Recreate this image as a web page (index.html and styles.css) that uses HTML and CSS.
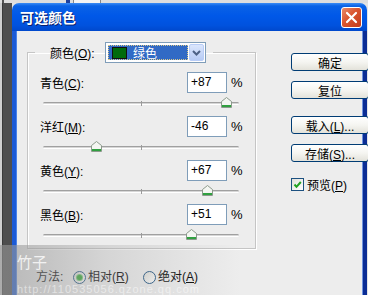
FILE: index.html
```html
<!DOCTYPE html>
<html lang="zh-CN">
<head>
    <meta charset="UTF-8">
    <meta name="viewport" content="width=device-width, initial-scale=1.0">
    <title>可选颜色</title>
    <link rel="stylesheet" href="styles.css">
</head>
<body>
<div class="desk">
    <div class="desk_top">
        <span class="top_a"></span>
        <span class="top_line"></span>
        <span class="top_box"></span>
    </div>
    <div class="desk_row">
        <div class="desk_left"></div>
        <div class="win">
            <div class="title_bar">
                <span class="title">可选颜色</span>
                <span class="close">
                    <svg width="21" height="21" viewBox="0 0 21 21">
                        <path d="M6 6 L15 15 M15 6 L6 15" stroke="#fff" stroke-width="2.2" stroke-linecap="round"/>
                    </svg>
                </span>
            </div>
            <div class="client">
                <div class="main">
                    <fieldset class="group">
                        <legend>
                            <span class="lg_lbl">颜色(<u>O</u>):</span>
                            <span class="select">
                                <span class="sel_val"><i class="swatch"></i>绿色</span>
                                <span class="sel_btn">
                                    <svg width="9" height="6" viewBox="0 0 9 6">
                                        <path d="M1 1 L4.5 4.5 L8 1" stroke="#4d6185" stroke-width="2" fill="none"/>
                                    </svg>
                                </span>
                            </span>
                        </legend>

                        <div class="row">
                            <div class="row_top">
                                <span class="lbl">青色(<u>C</u>):</span>
                                <span class="num">+87</span>
                                <span class="pct">%</span>
                            </div>
                            <div class="slider">
                                <span class="track"></span>
                                <span class="tick"></span>
                                <span class="thumb" style="left: 93.5%">
                                    <svg width="11" height="11" viewBox="0 0 11 11"><path d="M0.5 4.5 L5.5 0.5 L10.5 4.5 L10.5 10.5 L0.5 10.5 Z" fill="#f4f6f2" stroke="#8c9a8c"/><rect x="1" y="8" width="9" height="2" fill="#30a040"/></svg>
                                </span>
                            </div>
                        </div>
                        <div class="row">
                            <div class="row_top">
                                <span class="lbl">洋红(<u>M</u>):</span>
                                <span class="num">-46</span>
                                <span class="pct">%</span>
                            </div>
                            <div class="slider">
                                <span class="track"></span>
                                <span class="tick"></span>
                                <span class="thumb" style="left: 27%">
                                    <svg width="11" height="11" viewBox="0 0 11 11"><path d="M0.5 4.5 L5.5 0.5 L10.5 4.5 L10.5 10.5 L0.5 10.5 Z" fill="#f4f6f2" stroke="#8c9a8c"/><rect x="1" y="8" width="9" height="2" fill="#30a040"/></svg>
                                </span>
                            </div>
                        </div>
                        <div class="row">
                            <div class="row_top">
                                <span class="lbl">黄色(<u>Y</u>):</span>
                                <span class="num">+67</span>
                                <span class="pct">%</span>
                            </div>
                            <div class="slider">
                                <span class="track"></span>
                                <span class="tick"></span>
                                <span class="thumb" style="left: 83.5%">
                                    <svg width="11" height="11" viewBox="0 0 11 11"><path d="M0.5 4.5 L5.5 0.5 L10.5 4.5 L10.5 10.5 L0.5 10.5 Z" fill="#f4f6f2" stroke="#8c9a8c"/><rect x="1" y="8" width="9" height="2" fill="#30a040"/></svg>
                                </span>
                            </div>
                        </div>
                        <div class="row">
                            <div class="row_top">
                                <span class="lbl">黑色(<u>B</u>):</span>
                                <span class="num">+51</span>
                                <span class="pct">%</span>
                            </div>
                            <div class="slider">
                                <span class="track"></span>
                                <span class="tick"></span>
                                <span class="thumb" style="left: 75.5%">
                                    <svg width="11" height="11" viewBox="0 0 11 11"><path d="M0.5 4.5 L5.5 0.5 L10.5 4.5 L10.5 10.5 L0.5 10.5 Z" fill="#f4f6f2" stroke="#8c9a8c"/><rect x="1" y="8" width="9" height="2" fill="#30a040"/></svg>
                                </span>
                            </div>
                        </div>
                    </fieldset>

                    <div class="method">
                        <span class="m_lbl">方法:</span>
                        <span class="radio on"></span>
                        <span class="r_txt">相对(<u>R</u>)</span>
                        <span class="radio"></span>
                        <span class="r_txt">绝对(<u>A</u>)</span>
                    </div>
                </div>

                <div class="side">
                    <button class="btn b_ok">确定</button>
                    <button class="btn b_reset">复位</button>
                    <button class="btn b_load">载入(<u>L</u>)...</button>
                    <button class="btn b_save">存储(<u>S</u>)...</button>
                    <div class="check_row">
                        <span class="check">
                            <svg width="11" height="11" viewBox="0 0 11 11">
                                <path d="M2.5 5.5 L4.5 7.8 L8.8 3" stroke="#21a121" stroke-width="2" fill="none"/>
                            </svg>
                        </span>
                        <span>预览(<u>P</u>)</span>
                    </div>
                </div>
            </div>
        </div>
    </div>
    <!-- 水印 -->
    <div class="mark">
        <span class="mark_name">竹子</span>
        <span class="mark_url">http://110535056.qzone.qq.com</span>
    </div>
</div>
</body>
</html>
```

FILE: styles.css
```css
* {
    box-sizing: border-box;
}

body {
    margin: 0;
    background: #dcdcdc;
    font-family: "Liberation Sans", "Noto Sans CJK SC", sans-serif;
    font-size: 12px;
    color: #000;
}

u {
    text-decoration: underline;
    text-underline-offset: 1px;
}

.desk {
    width: 368px;
    height: 295px;
    overflow: hidden;
    position: relative;
    background: #e4e4e4;
}

.desk_top {
    height: 3px;
    display: flex;
    background: #dedede;
}

.top_a {
    width: 2px;
    margin-left: 2px;
    background: #555;
}

.top_line {
    width: 4px;
    margin-left: 62px;
    background: #1d3f9c;
}

.top_box {
    width: 28px;
    margin-left: 3px;
    background: #f4f4f4;
    border-left: 1px solid #888;
    border-right: 1px solid #888;
}

.desk_row {
    display: flex;
    height: 292px;
}

.desk_left {
    width: 12px;
    background: linear-gradient(to right, #cfcfcf 0, #cfcfcf 2px, #3a3a3a 2px, #3a3a3a 3px, #4e4e4e 3px);
}

.win {
    width: 355px;
    display: flex;
    flex-direction: column;
}

.title_bar {
    height: 28px;
    display: flex;
    align-items: center;
    justify-content: space-between;
    padding: 0 5px 0 8px;
    border-radius: 7px 7px 0 0;
    background: linear-gradient(#3b8cf5 0, #0a62e6 3px, #0058e8 45%, #0052de 80%, #0048cc 100%);
}

.title {
    color: #fff;
    font-family: "Noto Sans CJK SC", sans-serif;
    font-weight: bold;
    font-size: 14px;
    text-shadow: 1px 1px 0 #0a1f6c;
}

.close {
    width: 21px;
    height: 21px;
    border: 1px solid #fff;
    border-radius: 3px;
    background: linear-gradient(135deg, #e98b6b 0, #d9542f 45%, #c23c1b 100%);
    display: flex;
}

.close svg {
    margin: -1px;
}

.client {
    flex: 1;
    display: flex;
    background: #ededed;
    border-left: 4px solid #1b5ad6;
    border-right: 4px solid #0b2d95;
    box-shadow: inset 1px 0 0 #4a82e8, inset -1px 0 0 #6f93dd;
}

.main {
    width: 258px;
    padding-left: 11px;
    padding-top: 11px;
}

.group {
    width: 229px;
    margin: 0;
    padding: 9px 0 0 0;
    border: 1px solid #c5c5c5;
    box-shadow: 1px 1px 0 #fff, inset 1px 1px 0 #fff;
}

.group legend {
    display: flex;
    align-items: center;
    margin-left: 7px;
    padding: 0 7px 0 15px;
    height: 21px;
}

.lg_lbl {
    width: 55px;
}

.select {
    width: 101px;
    height: 21px;
    border: 1px solid #7f9db9;
    background: #fff;
    display: flex;
    align-items: center;
    padding: 0 1px 0 2px;
}

.sel_val {
    width: 82px;
    height: 15px;
    display: flex;
    align-items: center;
    color: #fff;
    background: #316ac5;
    outline: 1px dotted #d9c98a;
    outline-offset: -1px;
    padding-left: 4px;
}

.swatch {
    width: 15px;
    height: 12px;
    background: #006b0c;
    border: 1px solid #111;
    margin-right: 6px;
}

.sel_btn {
    width: 15px;
    height: 17px;
    margin-left: 1px;
    border-radius: 2px;
    border: 1px solid #b9cdf7;
    background: linear-gradient(#dbe6fc, #b7cbf5);
    display: flex;
    align-items: center;
    justify-content: center;
}

.row {
    height: 44px;
    padding-left: 12px;
}

.row_top {
    height: 21px;
    display: flex;
    align-items: center;
}

.lbl {
    width: 147px;
}

.num {
    width: 40px;
    height: 21px;
    line-height: 19px;
    padding-left: 3px;
    background: #fff;
    border: 1px solid #7f9db9;
}

.pct {
    margin-left: 4px;
    font-size: 13px;
}

.slider {
    position: relative;
    width: 196px;
    height: 23px;
    margin-left: 3px;
}

.track {
    position: absolute;
    left: 0;
    right: 0;
    top: 9px;
    height: 3px;
    border-radius: 2px;
    border-top: 1px solid #a0a0a0;
    border-bottom: 1px solid #fff;
    background: #d6d6d6;
}

.tick {
    position: absolute;
    left: 50%;
    top: 8px;
    width: 1px;
    height: 5px;
    background: #9a9a9a;
}

.thumb {
    position: absolute;
    top: 4px;
    width: 11px;
    height: 11px;
    margin-left: -5px;
    display: flex;
}

.method {
    display: flex;
    align-items: center;
    height: 18px;
    margin-top: 19px;
    padding-left: 9px;
    line-height: 13px;
}

.m_lbl {
    width: 37px;
}

.radio {
    width: 13px;
    height: 13px;
    border-radius: 50%;
    border: 1px solid #1c5180;
    background: linear-gradient(135deg, #dcdcd6, #fff);
    margin-right: 2px;
    display: flex;
    align-items: center;
    justify-content: center;
}

.radio.on::after {
    content: "";
    width: 5px;
    height: 5px;
    border-radius: 50%;
    background: #2da52d;
    box-shadow: 0 0 0 1px #70c870;
}

.r_txt {
    width: 55px;
}

.side {
    width: 90px;
    padding-top: 22px;
    padding-left: 18px;
    display: flex;
    flex-direction: column;
}

.btn {
    width: 78px;
    height: 18px;
    padding: 0;
    font: inherit;
    color: #000;
    border: 1px solid #003c74;
    border-radius: 3px;
    background: linear-gradient(#fff 0, #f5f5f1 50%, #e3e2da 100%);
}

.b_reset {
    margin-top: 10px;
}

.b_load {
    margin-top: 17px;
}

.b_save {
    margin-top: 10px;
}

.check_row {
    display: flex;
    align-items: center;
    margin-top: 15px;
    height: 14px;
}

.check {
    width: 13px;
    height: 13px;
    border: 1px solid #1c5180;
    background: linear-gradient(135deg, #e0e0da, #fff);
    margin-right: 3px;
    display: flex;
    align-items: center;
    justify-content: center;
}

.mark {
    position: absolute;
    left: 0;
    top: 245px;
    width: 240px;
    height: 50px;
    padding: 10px 0 0 17px;
    background: linear-gradient(to right, rgba(150, 150, 150, 0.62) 0, rgba(170, 170, 170, 0.35) 45%, rgba(200, 200, 200, 0) 100%);
    display: flex;
    flex-direction: column;
    color: rgba(255, 255, 255, 0.8);
    pointer-events: none;
}

.mark_name {
    font-family: "Noto Sans CJK SC", sans-serif;
    font-size: 15px;
    line-height: 14px;
}

.mark_url {
    margin-top: 15px;
    font-size: 11px;
    line-height: 10px;
    letter-spacing: 1px;
    color: rgba(255, 255, 255, 0.5);
}
```
